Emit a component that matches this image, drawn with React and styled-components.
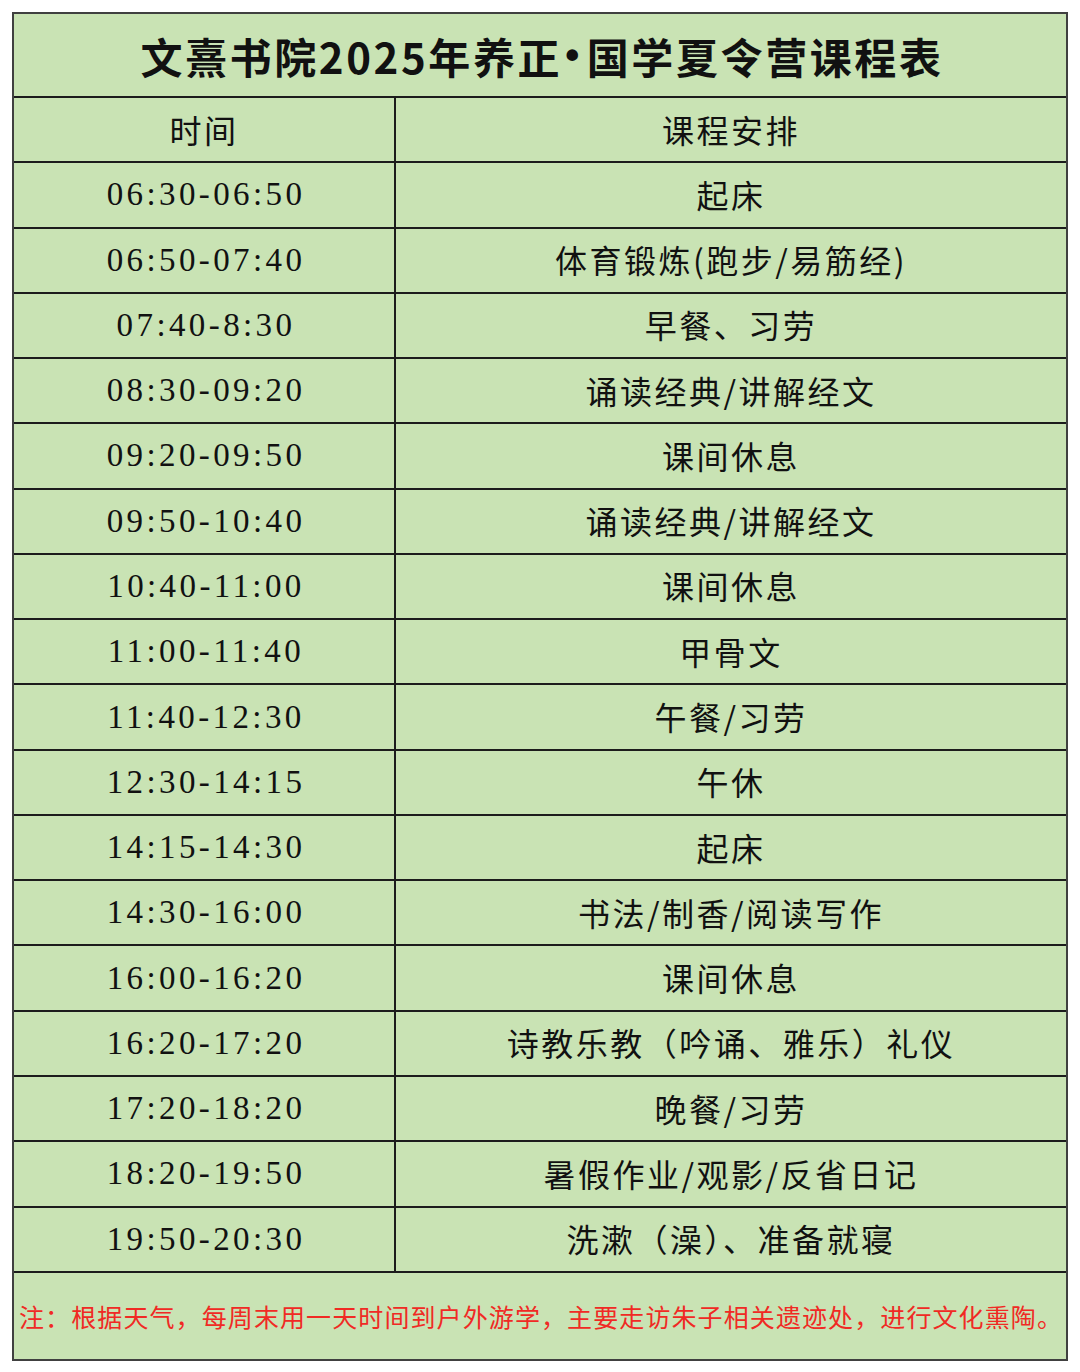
import React from 'react';
import styled, { createGlobalStyle } from 'styled-components';

const GlobalStyle = createGlobalStyle`
  html, body {
    margin: 0;
    padding: 0;
    background: #ffffff;
  }
  body {
    font-family: "Liberation Serif", "Noto Sans CJK SC", serif;
  }
`;

const Page = styled.div`
  width: 1080px;
  height: 1372px;
  padding: 12px 0 0 12px;
  box-sizing: border-box;
`;

const Sheet = styled.div`
  width: 1056px;
  border: 2px solid #404040;
  background: #c9e3b4;
  box-sizing: border-box;
  color: #111;
`;

const Title = styled.div`
  height: 84px;
  border-bottom: 2px solid #1c1c1c;
  box-sizing: border-box;
  display: flex;
  align-items: center;
  justify-content: center;
  font-family: "Noto Sans CJK SC", sans-serif;
  font-weight: 700;
  font-size: 42px;
  letter-spacing: 2.6px;
  padding-left: 4px;
`;

const Dot = styled.span`
  font-family: "Liberation Sans", sans-serif;
  font-size: 40px;
  margin: 0 5px 0 3px;
`;

const Row = styled.div`
  display: grid;
  grid-template-columns: 382px 1fr;
  height: 65.28px;
  border-bottom: 2px solid #1c1c1c;
  box-sizing: border-box;
`;

const Cell = styled.div`
  display: flex;
  align-items: center;
  justify-content: center;
  font-size: ${p => (p.$time ? '33px' : '32px')};
  font-family: ${p => (p.$time ? '"Liberation Serif", "Noto Sans CJK SC", serif' : '"Noto Sans CJK SC", sans-serif')};
  letter-spacing: ${p => (p.$time ? '3.4px' : '2.5px')};
  font-weight: 400;
  border-right: ${p => (p.$left ? '2px solid #1c1c1c' : 'none')};
  padding-bottom: ${p => (p.$time ? '0' : '2px')};
  padding-left: ${p => (p.$time ? '4px' : '0')};
`;

const Note = styled.div`
  height: 86px;
  display: flex;
  align-items: center;
  padding-left: 5px;
  font-family: "Noto Sans CJK SC", sans-serif;
  font-size: 25px;
  letter-spacing: 1.1px;
  color: #f02a24;
  white-space: nowrap;
`;

const rows = [
  ['06:30-06:50', '起床'],
  ['06:50-07:40', '体育锻炼(跑步/易筋经)'],
  ['07:40-8:30', '早餐、习劳'],
  ['08:30-09:20', '诵读经典/讲解经文'],
  ['09:20-09:50', '课间休息'],
  ['09:50-10:40', '诵读经典/讲解经文'],
  ['10:40-11:00', '课间休息'],
  ['11:00-11:40', '甲骨文'],
  ['11:40-12:30', '午餐/习劳'],
  ['12:30-14:15', '午休'],
  ['14:15-14:30', '起床'],
  ['14:30-16:00', '书法/制香/阅读写作'],
  ['16:00-16:20', '课间休息'],
  ['16:20-17:20', '诗教乐教（吟诵、雅乐）礼仪'],
  ['17:20-18:20', '晚餐/习劳'],
  ['18:20-19:50', '暑假作业/观影/反省日记'],
  ['19:50-20:30', '洗漱（澡）、准备就寝'],
];

const App = () => {
  return (
    <Page>
      <GlobalStyle />
      <Sheet>
        <Title>文熹书院2025年养正<Dot>•</Dot>国学夏令营课程表</Title>
        <Row>
          <Cell $left>时间</Cell>
          <Cell>课程安排</Cell>
        </Row>
        {rows.map(([time, item], i) => (
          <Row key={i}>
            <Cell $left $time>{time}</Cell>
            <Cell>{item}</Cell>
          </Row>
        ))}
        <Note>注：根据天气，每周末用一天时间到户外游学，主要走访朱子相关遗迹处，进行文化熏陶。</Note>
      </Sheet>
    </Page>
  );
};

export default App;
